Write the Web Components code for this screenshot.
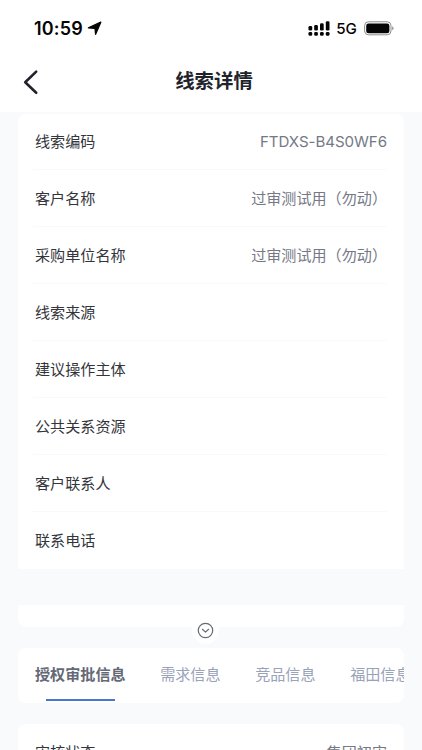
<!DOCTYPE html>
<html lang="zh-CN">
<head>
<meta charset="utf-8">
<title>线索详情</title>
<style>
html,body{margin:0;height:750px;overflow:hidden;background:#f8fafc}
body{font-family:Inter,"Noto Sans CJK SC",sans-serif}
</style>
</head>
<body>
<lead-page></lead-page>
<script>
const define = (name, html) => customElements.define(name, class extends HTMLElement {
  constructor() {
    super();
    this.attachShadow({ mode: 'open' }).innerHTML = html;
  }
});

define('status-bar', `
<style>
:host{display:flex;align-items:center;height:57px;box-sizing:border-box;padding:0 28.5px 0 34px;color:#050505}
.time{font:600 18px/22px Inter,sans-serif;letter-spacing:.15px;margin-top:1px}
.loc{margin-left:4px}
.sig{margin-left:auto}
.net{font:500 15.2px/22px Inter,sans-serif;margin:1px 7px 0 6.5px;letter-spacing:-.3px}
svg{display:block}
</style>
<span class="time">10:59</span>
<svg class="loc" width="15" height="15" viewBox="0 0 15 15"><path d="M13.8 1.2 8.6 13.3 8 7.4 1.4 6.9Z" fill="currentColor" stroke="currentColor" stroke-width="1.3" stroke-linejoin="round"/></svg>
<svg class="sig" width="22" height="15" viewBox="0 0 22 15" fill="currentColor"><rect x=".5" y="5" width="3.7" height="4.6" rx="1.3"/><rect x="6.2" y="4" width="3.7" height="5.6" rx="1.3"/><rect x="12" y="2.2" width="3.7" height="7.4" rx="1.3"/><rect x="17.8" y=".3" width="3.7" height="9.3" rx="1.3"/><rect x=".5" y="11" width="3.7" height="3.7" rx="1.3"/><rect x="6.2" y="11" width="3.7" height="3.7" rx="1.3"/><rect x="12" y="11" width="3.7" height="3.7" rx="1.3"/><rect x="17.8" y="11" width="3.7" height="3.7" rx="1.3"/></svg>
<span class="net">5G</span>
<svg width="30" height="15" viewBox="0 0 30 15"><rect x=".6" y=".8" width="26.4" height="13" rx="3.8" fill="none" stroke="#8d8d8d"/><rect x="2.2" y="2.4" width="23.2" height="9.8" rx="2.3" fill="currentColor"/><path d="M28.2 5.3Q29.5 5.8 29.5 7.3T28.2 9.3Z" fill="#8d8d8d"/></svg>
`);

define('nav-bar', `
<style>
:host{display:grid;grid-template-columns:60px 1fr 54px;align-items:center;height:55px;box-sizing:border-box;padding-bottom:8px;color:#20232b}
svg{display:block;margin-left:22px;margin-top:2px}
h1{margin:0;text-align:center;font-size:19.4px;line-height:28px;font-weight:700}
</style>
<svg width="18" height="26" viewBox="0 0 18 26"><path d="M14.2 2.6 3.2 13.2 14.2 23.8" fill="none" stroke="currentColor" stroke-width="2.6" stroke-linecap="round" stroke-linejoin="round"/></svg>
<h1><slot></slot></h1>
`);

define('info-row', `
<style>
:host{display:flex;align-items:center;justify-content:space-between;height:56.88px;box-sizing:border-box;margin:0 17px 0 15.5px;border-bottom:1px solid #f8f9fa;font-size:15.1px;line-height:22px;color:#33353b;padding:2px 0 0 2px}
:host(.last){border-color:transparent}
.v{color:#757986;letter-spacing:0}
::slotted(.code){letter-spacing:-.06px}
</style>
<span><slot></slot></span><span class="v"><slot name="value"></slot></span>
`);

define('info-card', `
<style>:host{display:block;background:#fff;border-radius:8px;overflow:hidden}:host(.open){border-radius:8px 8px 0 0}</style>
<slot></slot>
`);

define('expand-toggle', `
<style>
:host{display:block;position:relative;height:22px;background:#fff;border-radius:0 0 8px 8px}
div{position:absolute;left:174.5px;top:12px;width:27px;height:27px;border-radius:50%;background:#fff;display:grid;place-items:center}
svg{display:block}
</style>
<div><svg width="17" height="17" viewBox="0 0 17 17" fill="none" stroke="#666a70" stroke-width="1.2" stroke-linecap="round" stroke-linejoin="round"><circle cx="8.5" cy="8.5" r="7.2"/><path d="m5.4 7.3 3.1 2.8 3.1-2.8"/></svg></div>
`);

define('tab-item', `
<style>
:host{display:flex;flex:none;flex-direction:column;align-items:center;height:55px;box-sizing:border-box;padding-top:16px;font-size:15.1px;line-height:22px;color:#9aa2b8;white-space:nowrap}
:host([active]){color:#646975;font-weight:700}
i{display:none;width:69px;height:2px;margin-top:13px;background:#4b74d2}
:host([active]) i{display:block}
</style>
<span><slot></slot></span><i></i>
`);

define('tab-bar', `
<style>:host{display:flex;gap:34.6px;height:54.5px;padding-left:17.5px;background:#fff;border-radius:8px;overflow:hidden}</style>
<slot></slot>
`);

define('lead-page', `
<style>
:host{display:block;height:750px;overflow:hidden}
header{background:#fff;height:112px}
main{padding:1.5px 18px 0 17.5px}
.open{height:455px}
expand-toggle{margin-top:36.5px}
tab-bar{margin-top:21px}
.review{margin-top:21.5px}
</style>
<header><status-bar></status-bar><nav-bar>线索详情</nav-bar></header>
<main>
<info-card class="open">
<info-row>线索编码<span class="code" slot="value">FTDXS-B4S0WF6</span></info-row>
<info-row>客户名称<span slot="value">过审测试用（勿动）</span></info-row>
<info-row>采购单位名称<span slot="value">过审测试用（勿动）</span></info-row>
<info-row>线索来源</info-row>
<info-row>建议操作主体</info-row>
<info-row>公共关系资源</info-row>
<info-row>客户联系人</info-row>
<info-row class="last">联系电话</info-row>
</info-card>
<expand-toggle></expand-toggle>
<tab-bar><tab-item active>授权审批信息</tab-item><tab-item>需求信息</tab-item><tab-item>竞品信息</tab-item><tab-item>福田信息</tab-item></tab-bar>
<info-card class="review"><info-row>审核状态<span slot="value">集团初审</span></info-row></info-card>
</main>
`);
</script>
</body>
</html>
